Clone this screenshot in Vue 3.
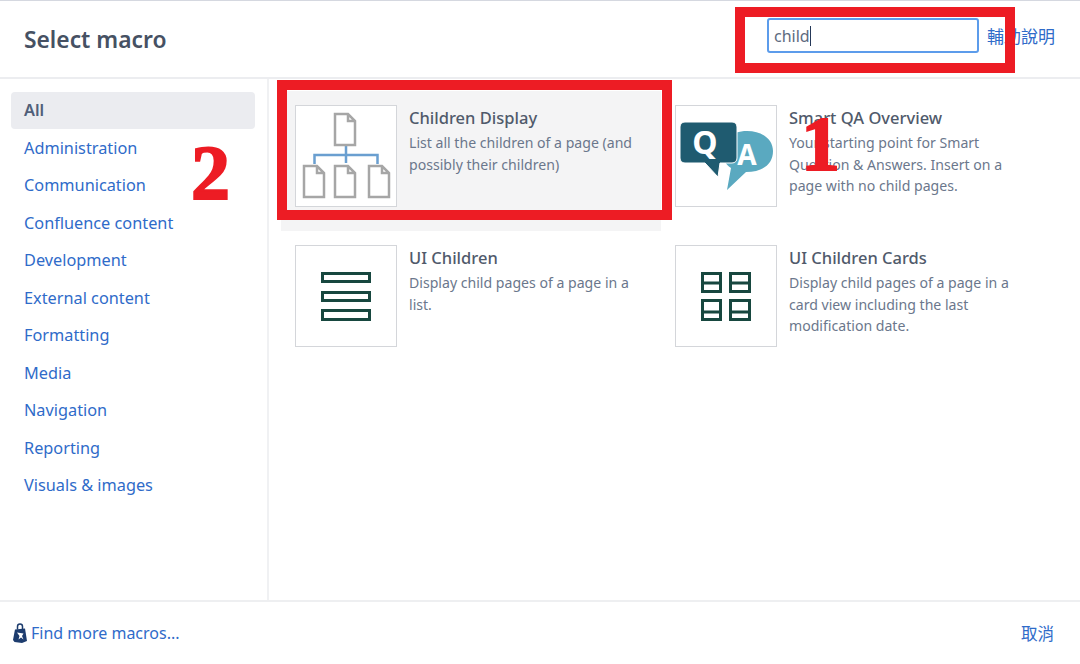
<template>
  <div class="dialog">
    <header class="head">
      <h2 class="title">Select macro</h2>
      <div class="search-wrap">
        <div class="search">child<span class="caret"></span></div>
        <a class="link help">輔助說明</a>
      </div>
    </header>

    <div class="body">
      <nav class="side">
        <a
          v-for="(c, i) in categories"
          :key="c"
          class="cat"
          :class="{ active: i === 0 }"
        >{{ c }}</a>
      </nav>

      <main class="grid">
        <div v-for="(m, i) in macros" :key="m.name" class="card" :class="{ selected: i === 0 }">
          <div class="thumb">
            <svg v-if="m.icon === 'tree'" viewBox="0 0 100 100" width="100" height="100" fill="none">
              <path d="M50 40v17M18.500 58v-9h63v9" stroke="#6a9fd0" stroke-width="2.500" />
              <g stroke="#a6a6a6" stroke-width="2.500" stroke-linejoin="miter">
                <path d="M39 8h13l7 7v24H39zM52 8v7h7" />
                <path d="M8 60h13l7 7v24H8zM21 60v7h7" />
                <path d="M39 60h13l7 7v24H39zM52 60v7h7" />
                <path d="M73 60h13l7 7v24H73zM86 60v7h7" />
              </g>
            </svg>
            <svg v-else-if="m.icon === 'qa'" viewBox="0 0 100 100" width="100" height="100">
              <path d="M71 25c-16 0-25 9-25 20 0 7 3 13 9 17l-4 22 19-18c17 0 27-8 27-21 0-11-10-20-26-20z" fill="#5aa9c0" />
              <path d="M9 16h47c3 0 5 2 5 5v31c0 3-2 5-5 5H44l-2 14-13-14H9c-3 0-5-2-5-5V21c0-3 2-5 5-5z" fill="#1f5b70" stroke="#fff" stroke-width="1" />
              <text x="29" y="48" class="qa-q">Q</text>
              <text x="71" y="59" class="qa-a">A</text>
            </svg>
            <svg v-else-if="m.icon === 'list'" viewBox="0 0 100 100" width="100" height="100" fill="none">
              <g stroke="#17473f" stroke-width="3">
                <rect x="26.500" y="27.500" width="47" height="8" />
                <rect x="26.500" y="46.500" width="47" height="8" />
                <rect x="26.500" y="64.500" width="47" height="9" />
              </g>
            </svg>
            <svg v-else viewBox="0 0 100 100" width="100" height="100" fill="none">
              <g stroke="#17473f" stroke-width="3">
                <path d="M26.500 27.500h18v18h-18zM26.500 37h18" />
                <path d="M54.500 27.500h19v18h-19zM54.500 37h19" />
                <path d="M26.500 54.500h18v19h-18zM26.500 66h18" />
                <path d="M54.500 54.500h19v19h-19zM54.500 66h19" />
              </g>
            </svg>
          </div>
          <div class="info">
            <div class="name">{{ m.name }}</div>
            <div class="desc">{{ m.desc }}</div>
          </div>
        </div>
      </main>
    </div>

    <footer class="foot">
      <a class="link more">
        <svg class="bag" viewBox="0 0 14 20" width="14" height="20">
          <path d="M4.500 6.500V3.500a2.500 2.500 0 0 1 5 0V6" fill="none" stroke="#1d3c6e" stroke-width="1.500" />
          <path d="M2 6.500l10-1 2 12.500-5 2-7.500-1L0 17z" fill="#1d3c6e" />
          <path d="M4 9.500l6.500 1-1.500 2.500 1.500 3.500-2.500-2-2.500 2 1-3.500z" fill="#fff" />
        </svg>
        Find more macros...
      </a>
      <a class="link cancel">取消</a>
    </footer>

    <!-- red annotations drawn over the screenshot -->
    <div class="mark mark-search"></div>
    <div class="mark mark-card"></div>
    <span class="num num-1">1</span>
    <span class="num num-2">2</span>
  </div>
</template>

<script setup>
const categories = [
  'All',
  'Administration',
  'Communication',
  'Confluence content',
  'Development',
  'External content',
  'Formatting',
  'Media',
  'Navigation',
  'Reporting',
  'Visuals & images'
]

const macros = [
  { name: 'Children Display', icon: 'tree', desc: 'List all the children of a page (and possibly their children)' },
  { name: 'Smart QA Overview', icon: 'qa', desc: 'Your starting point for Smart Question & Answers. Insert on a page with no child pages.' },
  { name: 'UI Children', icon: 'list', desc: 'Display child pages of a page in a list.' },
  { name: 'UI Children Cards', icon: 'cards', desc: 'Display child pages of a page in a card view including the last modification date.' }
]
</script>

<style>
html, body {
  background: #fff;
  overflow: hidden;
}
</style>

<style scoped>
.dialog {
  position: relative;
  display: flex;
  flex-direction: column;
  width: 1080px;
  height: 664px;
  box-sizing: border-box;
  border-top: 1px solid #d5d8e0;
  font-family: "Noto Sans", "Noto Sans CJK TC", sans-serif;
  color: #505f79;
  background: #fff;
  overflow: hidden;
}

.link {
  color: #2f6bc9;
  font-size: 16px;
}

.head {
  display: flex;
  align-items: center;
  justify-content: space-between;
  height: 78px;
  box-sizing: border-box;
  padding: 0 25px 7px 24px;
  border-bottom: 2px solid #ecedf0;
  flex: none;
}

.title {
  margin: 7px 0 0;
  font-size: 22.800px;
  font-weight: 600;
  color: #465163;
}

.search-wrap {
  display: flex;
  align-items: center;
  gap: 8px;
}

.help {
  font-size: 17px;
}

.search {
  display: flex;
  align-items: center;
  width: 212px;
  height: 35px;
  box-sizing: border-box;
  padding-left: 5px;
  border: 2px solid #5c9ceb;
  border-radius: 3px;
  font-size: 16px;
  color: #5e6b80;
}

.caret {
  width: 1px;
  height: 20px;
  background: #253858;
}

.body {
  flex: 1;
  display: flex;
  min-height: 0;
}

.side {
  width: 269px;
  box-sizing: border-box;
  padding: 12.500px 12px 0 11px;
  border-right: 2px solid #f0f1f3;
  display: flex;
  flex-direction: column;
  flex: none;
}

.cat {
  display: flex;
  align-items: center;
  height: 37.500px;
  padding-left: 13px;
  border-radius: 4px;
  font-size: 16.300px;
  color: #2f6bc9;
}

.cat.active {
  background: #ebecf0;
  color: #505f79;
  font-weight: 600;
}

.grid {
  display: grid;
  grid-template-columns: 380px 380px;
  grid-auto-rows: 140px;
  padding: 12px 0 0 12px;
  align-content: start;
}

.card {
  display: flex;
  gap: 12px;
  padding: 14px;
  box-sizing: border-box;
}

.card.selected {
  background: #f4f4f5;
}

.thumb {
  width: 102px;
  height: 102px;
  box-sizing: border-box;
  border: 1px solid #d4d6da;
  background: #fff;
  flex: none;
}

.thumb svg {
  display: block;
}

.qa-q,
.qa-a {
  font-family: "Noto Sans", sans-serif;
  font-weight: 700;
  fill: #fff;
  text-anchor: middle;
}

.qa-q {
  font-size: 32px;
}

.qa-a {
  font-size: 28px;
}

.info {
  width: 238px;
}

.name {
  font-size: 16.500px;
  font-weight: 500;
  line-height: 22px;
  color: #505a6b;
  margin-top: 2px;
}

.desc {
  margin-top: 3px;
  font-size: 14.100px;
  line-height: 21.500px;
  color: #6b778c;
}

.foot {
  display: flex;
  align-items: center;
  justify-content: space-between;
  height: 64px;
  box-sizing: border-box;
  padding: 0 26px 0 13px;
  border-top: 2px solid #eeeff1;
  flex: none;
}

.more {
  display: flex;
  align-items: center;
  gap: 4px;
}

.cancel {
  font-size: 16.500px;
}

.bag {
  flex: none;
}

.mark {
  position: absolute;
  box-sizing: border-box;
  border: 10px solid #ed1c24;
}

.mark-search {
  left: 735px;
  top: 6px;
  width: 280px;
  height: 66px;
}

.mark-card {
  left: 277px;
  top: 79px;
  width: 395px;
  height: 140px;
}

.num {
  position: absolute;
  font-family: "Liberation Serif", serif;
  font-weight: 700;
  font-size: 78px;
  color: #ed1c24;
  line-height: 1;
  -webkit-text-stroke: 2px #ed1c24;
}

.num-1 {
  left: 801px;
  top: 104px;
}

.num-2 {
  left: 191px;
  top: 133px;
}
</style>
